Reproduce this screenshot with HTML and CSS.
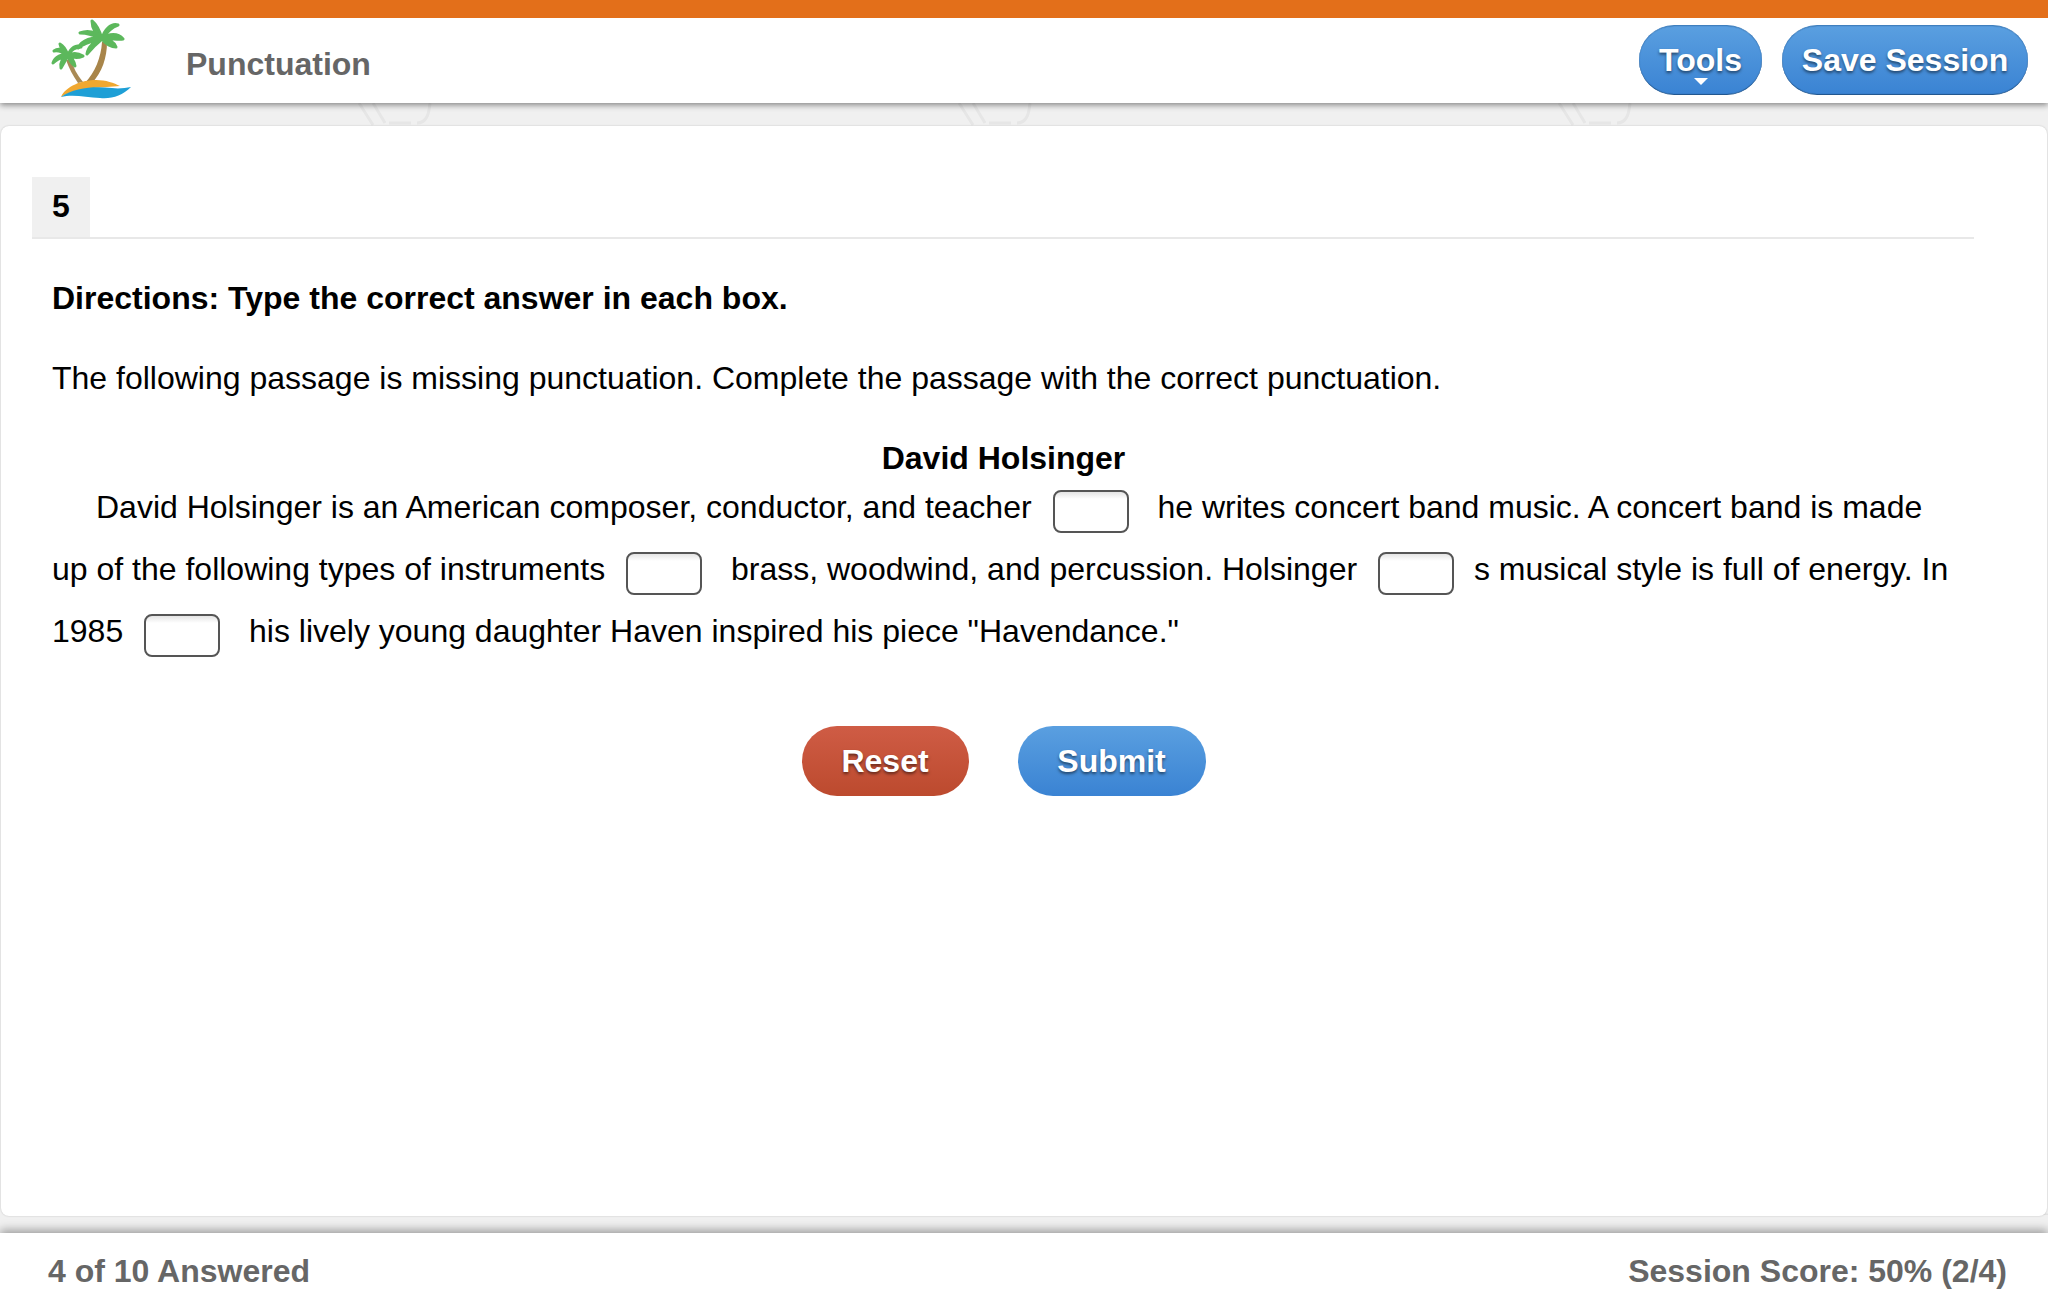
FILE: index.html
```html
<!DOCTYPE html>
<html lang="en">
<head>
    <meta charset="UTF-8">
    <title>Punctuation</title>
    <link rel="stylesheet" href="styles.css">
</head>
<body>
    <div class="page">
        <header class="top-bar">
            <div class="brand">
                <svg class="logo" viewBox="48 18 90 85" width="90" height="85">
                    <path d="M66 60 C69 68 73 76 78 83 L83 82 C77 75 73 67 71 59 Z" fill="#a98a55"/>
                    <path d="M102 42 C101 58 95 72 85 83 L92 83 C102 72 107 58 107 42 Z" fill="#a8854a"/>
                    <g fill="#5cb85c" stroke="#5cb85c" stroke-width="3" stroke-linejoin="round">
                        <path d="M68 55 C63 49 58 48 54 51 C58 50 63 52 68 55 Z M68 55 C62 54 55 56 53 63 C58 58 63 57 68 55 Z M68 55 C63 57 60 62 61 68 C64 63 66 59 68 55 Z M68 55 C69 60 72 64 75 66 C74 61 72 57 68 55 Z M68 55 C73 58 78 58 83 56 C78 53 73 53 68 55 Z M68 55 C71 50 76 47 81 47 C76 44 71 48 68 55 Z M68 55 C66 50 64 46 60 44 C61 49 64 53 68 55 Z"/>
                        <path d="M102 39 C96 31 87 30 80 33 C86 33 94 35 102 39 Z M102 39 C93 36 82 40 78 48 C85 42 93 41 102 39 Z M102 39 C95 41 88 46 87 54 C92 48 97 43 102 39 Z M102 39 C105 44 112 47 116 47 C114 42 108 38 102 39 Z M102 39 C110 38 118 40 123 39 C118 33 109 33 102 39 Z M102 39 C106 33 112 27 118 25 C111 23 104 30 102 39 Z M102 39 C100 32 97 25 92 21 C92 28 96 35 102 39 Z"/>
                    </g>
                    <path d="M61 97 C66 86 82 80 96 80 C106 80 114 83 120 86 C104 88 80 86 61 97 Z" fill="#f0a830"/>
                    <path d="M61 97 C74 87 96 86 112 88 C119 89 125 88 131 87 C122 96 112 99 100 98 C86 97 72 94 61 97 Z" fill="#1e9fd6"/>
                </svg>
                <h1 class="lesson-title">Punctuation</h1>
            </div>
            <div class="top-actions">
                <button class="pill pill-blue btn-tools" type="button">Tools<span class="caret"></span></button>
                <button class="pill pill-blue btn-save" type="button">Save Session</button>
            </div>
        </header>

        <main class="content">
            <svg class="watermark" width="2048" height="1112">
                <defs>
                    <pattern id="wm-top" x="355" y="0" width="600" height="40" patternUnits="userSpaceOnUse">
                        <path d="M4 0 L18 22 M18 0 L30 20 M34 20 L56 20 M62 20 C72 20 74 10 75 0" fill="none" stroke="#e6e6e6" stroke-width="3"/>
                    </pattern>
                    <pattern id="wm-bottom" x="40" y="0" width="600" height="30" patternUnits="userSpaceOnUse">
                        <path d="M4 2 L24 16 L44 2 L60 16 L76 2 M110 2 L110 16 M130 2 L190 2 M190 2 L226 2 L226 16" fill="none" stroke="#e2e2e2" stroke-width="3"/>
                    </pattern>
                </defs>
                <rect width="2048" height="23" fill="url(#wm-top)"/>
                <rect y="1092" width="2048" height="20" fill="url(#wm-bottom)"/>
            </svg>
            <section class="card">
                <div class="tab-row">
                    <div class="tab">5</div>
                </div>
                <div class="question">
                    <p class="directions">Directions: Type the correct answer in each box.</p>
                    <p class="intro">The following passage is missing punctuation. Complete the passage with the correct punctuation.</p>
                    <h2 class="passage-title">David Holsinger</h2>
                    <p class="passage">
                        <span class="indent"></span>David Holsinger is an American composer, conductor, and teacher <input class="blank" type="text"> he writes concert band music. A concert band is made up of the following types of instruments <input class="blank" type="text"> brass, woodwind, and percussion. Holsinger <input class="blank" type="text">s musical style is full of energy. In 1985 <input class="blank" type="text"> his lively young daughter Haven inspired his piece "Havendance."
                    </p>
                    <div class="question-actions">
                        <button class="pill pill-red btn-reset" type="button">Reset</button>
                        <button class="pill pill-blue btn-submit" type="button">Submit</button>
                    </div>
                </div>
            </section>
        </main>

        <footer class="bottom-bar">
            <span>4 of 10 Answered</span>
            <span>Session Score: 50% (2/4)</span>
        </footer>
    </div>
</body>
</html>
```

FILE: styles.css
```css
* {
    box-sizing: border-box;
}

html, body {
    margin: 0;
    height: 100%;
}

body {
    font-family: "Liberation Sans", Arial, sans-serif;
    color: #000;
    background-color: #f0f0f0;
}

.page {
    display: flex;
    flex-direction: column;
    height: 1315px;
    overflow: hidden;
}

.top-bar {
    position: relative;
    z-index: 2;
    display: flex;
    flex: 0 0 103px;
    justify-content: space-between;
    border-top: 18px solid #e36f1a;
    background-color: #fff;
    box-shadow: 0 2px 6px rgba(0, 0, 0, 0.45);
}

.brand {
    display: flex;
    align-items: center;
    padding-left: 48px;
}

.logo {
    flex: none;
}

.lesson-title {
    margin: 8px 0 0 48px;
    font-size: 32px;
    color: #666;
}

.top-actions {
    display: flex;
    gap: 20px;
    align-items: flex-start;
    padding: 7px 20px 0 0;
}

.pill {
    height: 70px;
    padding: 0;
    border: 0;
    border-radius: 35px;
    font-family: inherit;
    font-size: 32px;
    font-weight: bold;
    color: #fff;
    text-shadow: 0 2px 3px rgba(0, 0, 0, 0.5);
}

.pill-blue {
    background: linear-gradient(#5a9fe0, #3a83d3);
}

.pill-red {
    background: linear-gradient(#cf5c45, #bc4a2e);
}

.btn-tools, .btn-save {
    position: relative;
    border-bottom: 1px solid #22578f;
    border-top: 1px solid #3f7fbe;
    box-shadow: inset 0 0 1px #22578f;
}

.btn-tools {
    width: 123px;
}

.btn-save {
    width: 246px;
}

.caret {
    position: absolute;
    left: 50%;
    bottom: 9px;
    margin-left: -7px;
    border-top: 7px solid #fff;
    border-left: 7px solid transparent;
    border-right: 7px solid transparent;
}

.content {
    position: relative;
    flex: 1;
    padding: 23px 1px 17px;
}

.watermark {
    position: absolute;
    top: 0;
    left: 0;
}

.card {
    position: relative;
    height: 100%;
    padding-top: 51px;
    border-radius: 8px;
    background-color: #fff;
    box-shadow: 0 0 2px rgba(0, 0, 0, 0.2);
}

.tab-row {
    margin: 0 73px 0 31px;
    border-bottom: 2px solid #e8e8e8;
}

.tab {
    width: 58px;
    height: 60px;
    font-size: 32px;
    font-weight: bold;
    line-height: 58px;
    text-align: center;
    background-color: #f0f0f0;
}

.question {
    padding: 0 92px 0 51px;
    font-size: 32px;
}

.directions {
    margin: 39px 0 0;
    font-weight: bold;
    line-height: 40px;
}

.intro {
    margin: 40px 0 0;
    line-height: 40px;
}

.passage-title {
    margin: 40px 0 0;
    font-size: 32px;
    line-height: 40px;
    text-align: center;
}

.passage {
    margin: -2px 0 0;
    line-height: 62px;
    height: 186px;
}

.indent {
    display: inline-block;
    width: 44px;
}

.blank {
    width: 76px;
    height: 43px;
    margin: 0 20px 0 12px;
    border: 2px solid #555;
    border-radius: 8px;
    vertical-align: 2px;
    background: linear-gradient(#e4e4e4, #fff 7px);
}

.question-actions {
    display: flex;
    gap: 49px;
    justify-content: center;
    margin-top: 64px;
}

.btn-reset {
    width: 167px;
}

.btn-submit {
    width: 188px;
}

.bottom-bar {
    position: relative;
    z-index: 2;
    display: flex;
    flex: 0 0 82px;
    justify-content: space-between;
    padding: 20px 41px 0 48px;
    font-size: 32px;
    font-weight: bold;
    color: #666;
    background-color: #fff;
    box-shadow: 0 -3px 9px rgba(0, 0, 0, 0.35);
}
```
